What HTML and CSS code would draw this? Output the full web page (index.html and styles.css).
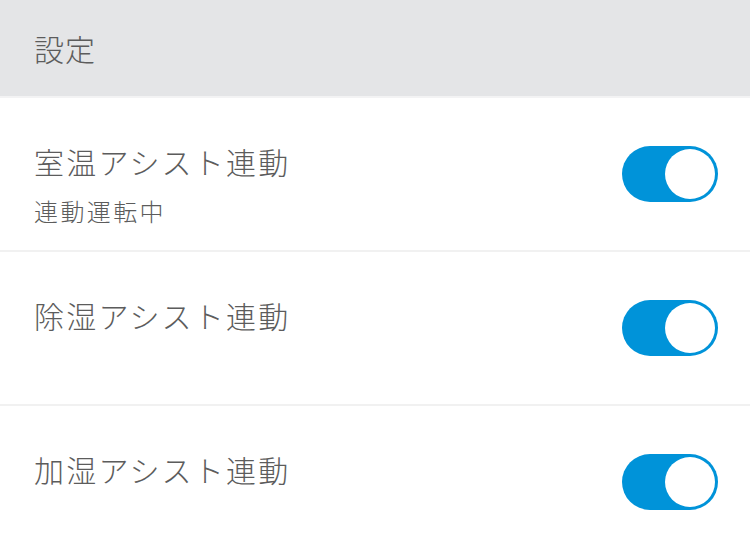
FILE: index.html
```html
<!DOCTYPE html>
<html lang="ja">
<head>
<meta charset="utf-8">
<title>設定</title>
<link rel="stylesheet" href="styles.css">
</head>
<body>
<header class="header">
  <h1 class="header-title">設定</h1>
</header>
<ul class="list">
  <li class="row">
    <div class="row-text">
      <div class="row-title">室温アシスト連動</div>
      <div class="row-sub">連動運転中</div>
    </div>
    <div class="toggle on"><span class="thumb"></span></div>
  </li>
  <li class="row">
    <div class="row-text">
      <div class="row-title">除湿アシスト連動</div>
    </div>
    <div class="toggle on"><span class="thumb"></span></div>
  </li>
  <li class="row">
    <div class="row-text">
      <div class="row-title">加湿アシスト連動</div>
    </div>
    <div class="toggle on"><span class="thumb"></span></div>
  </li>
</ul>
</body>
</html>
```
FILE: styles.css
```css
* { box-sizing: border-box; }
html, body {
  margin: 0;
  padding: 0;
  background: #ffffff;
  font-family: "Noto Sans CJK JP", "Noto Sans", sans-serif;
  font-weight: 300;
  color: #5c5c5c;
}
.header {
  height: 98px;
  background: #e4e5e7;
  border-bottom: 2px solid #f3f3f4;
  display: flex;
  align-items: center;
  padding-left: 34px;
}
.header-title {
  margin: 0;
  font-size: 30px;
  font-weight: 300;
  line-height: 1;
  letter-spacing: 1px;
}
.list {
  list-style: none;
  margin: 0;
  padding: 0;
}
.row {
  height: 154px;
  border-bottom: 2px solid #f1f1f1;
  display: flex;
  align-items: center;
  justify-content: space-between;
  padding: 0 32px 0 34px;
}
.row-text {
  align-self: flex-start;
  padding-top: 48px;
}
.row-title {
  font-size: 30px;
  line-height: 30px;
  letter-spacing: 2.2px;
}
.row-sub {
  margin-top: 23px;
  font-size: 24px;
  line-height: 24px;
  letter-spacing: 2.4px;
}
.toggle {
  width: 96px;
  height: 56px;
  border-radius: 28px;
  background: #0093d9;
  display: flex;
  align-items: center;
  justify-content: flex-end;
  padding: 0 3px;
}
.thumb {
  width: 50px;
  height: 50px;
  border-radius: 50%;
  background: #ffffff;
}
```
